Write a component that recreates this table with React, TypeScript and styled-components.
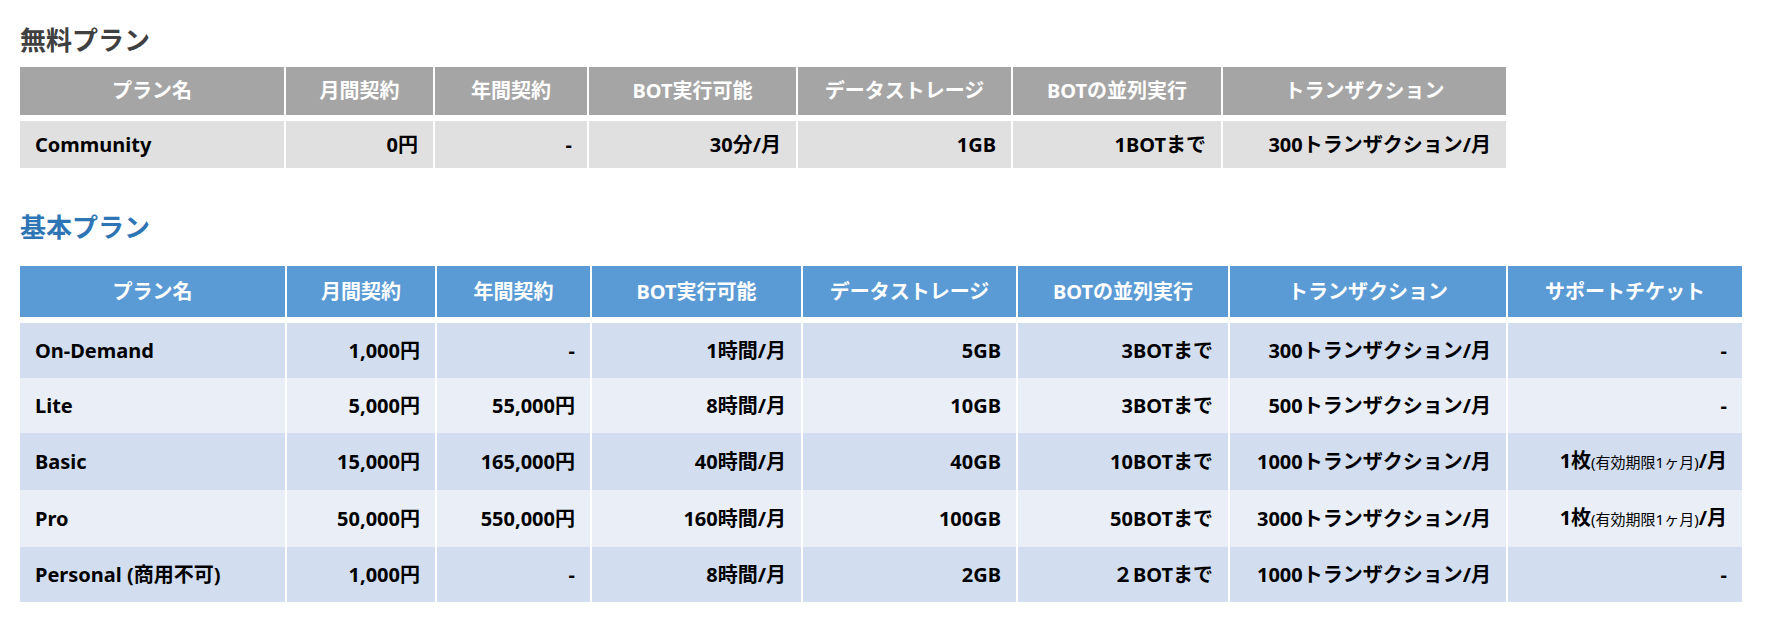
import React, { ReactNode } from 'react'
import styled, { createGlobalStyle } from 'styled-components'

type Tone = 'gray' | 'blue'

const palette = {
  gray: { title: '#404040', head: '#a5a5a5', band1: '#e0e0e0', band2: '#e0e0e0' },
  blue: { title: '#2e75b6', head: '#5b9bd5', band1: '#d2deef', band2: '#e9eef7' },
}

const GlobalStyle = createGlobalStyle`
  html, body {
    margin: 0;
    padding: 0;
    background: #ffffff;
  }

  body {
    font-family: "Noto Sans", "Noto Sans CJK JP", sans-serif;
    color: #000000;
  }
`

const Page = styled.div`
  display: flex;
  flex-direction: column;
  padding: 22px 0 0 20px;
`

const Section = styled.section<{ $gap: number; $top: number }>`
  display: flex;
  flex-direction: column;
  gap: ${p => p.$gap}px;
  margin-top: ${p => p.$top}px;
`

const Title = styled.h2<{ $tone: Tone }>`
  margin: 0;
  font-size: 26px;
  line-height: 36px;
  font-weight: 700;
  color: ${p => palette[p.$tone].title};
`

const Table = styled.table<{ $width: number }>`
  width: ${p => p.$width}px;
  border-collapse: separate;
  border-spacing: 0;
  table-layout: fixed;
`

const Col = styled.col<{ $w: number }>`
  width: ${p => p.$w}px;
`

const HeadCell = styled.th<{ $tone: Tone; $h: number }>`
  padding: 0;
  height: ${p => p.$h}px;
  line-height: ${p => p.$h}px;
  background-color: ${p => palette[p.$tone].head};
  color: #ffffff;
  font-size: 20px;
  font-weight: 700;
  text-align: center;
  white-space: nowrap;
  border-right: 2px solid #ffffff;
  border-bottom: 6px solid #ffffff;

  &:last-child {
    border-right: 0;
  }
`

const Row = styled.tr<{ $tone: Tone; $odd: boolean }>`
  background-color: ${p => (p.$odd ? palette[p.$tone].band1 : palette[p.$tone].band2)};

  & + & td {
    border-top: 2px solid #ffffff;
  }
`

const Cell = styled.td<{ $h: number }>`
  padding: 0 15px 0 15px;
  height: ${p => p.$h}px;
  line-height: ${p => p.$h}px;
  font-size: 20px;
  font-weight: 700;
  text-align: right;
  white-space: nowrap;
  border-right: 2px solid #ffffff;

  &:first-child {
    text-align: left;
  }

  &:last-child {
    border-right: 0;
  }
`

const Note = styled.span`
  font-size: 15px;
  font-weight: 400;
`

const headers = ['プラン名', '月間契約', '年間契約', 'BOT実行可能', 'データストレージ', 'BOTの並列実行', 'トランザクション']

const ticket = (
  <>
    1枚<Note>(有効期限1ヶ月)</Note>/月
  </>
)

const freeRows: ReactNode[][] = [
  ['Community', '0円', '-', '30分/月', '1GB', '1BOTまで', '300トランザクション/月'],
]

const basicRows: ReactNode[][] = [
  ['On-Demand', '1,000円', '-', '1時間/月', '5GB', '3BOTまで', '300トランザクション/月', '-'],
  ['Lite', '5,000円', '55,000円', '8時間/月', '10GB', '3BOTまで', '500トランザクション/月', '-'],
  ['Basic', '15,000円', '165,000円', '40時間/月', '40GB', '10BOTまで', '1000トランザクション/月', ticket],
  ['Pro', '50,000円', '550,000円', '160時間/月', '100GB', '50BOTまで', '3000トランザクション/月', ticket],
  ['Personal (商用不可)', '1,000円', '-', '8時間/月', '2GB', '２BOTまで', '1000トランザクション/月', '-'],
]

interface PlanTableProps {
  tone: Tone
  columns: string[]
  widths: number[]
  rows: ReactNode[][]
  headH: number
  rowH: number
}

const PlanTable = ({ tone, columns, widths, rows, headH, rowH }: PlanTableProps) => (
  <Table $width={widths.reduce((a, b) => a + b, 0)}>
    <colgroup>
      {widths.map((w, i) => (
        <Col key={i} $w={w} />
      ))}
    </colgroup>
    <thead>
      <tr>
        {columns.map(c => (
          <HeadCell key={c} $tone={tone} $h={headH}>
            {c}
          </HeadCell>
        ))}
      </tr>
    </thead>
    <tbody>
      {rows.map((row, r) => (
        <Row key={r} $tone={tone} $odd={r % 2 === 0}>
          {row.map((cell, i) => (
            <Cell key={i} $h={rowH}>
              {cell}
            </Cell>
          ))}
        </Row>
      ))}
    </tbody>
  </Table>
)

export default function App() {
  return (
    <Page>
      <GlobalStyle />
      <Section $gap={9} $top={0}>
        <Title $tone="gray">無料プラン</Title>
        <PlanTable
          tone="gray"
          columns={headers}
          widths={[266, 149, 154, 209, 215, 210, 283]}
          rows={freeRows}
          headH={48}
          rowH={47}
        />
      </Section>
      <Section $gap={21} $top={41}>
        <Title $tone="blue">基本プラン</Title>
        <PlanTable
          tone="blue"
          columns={[...headers, 'サポートチケット']}
          widths={[267, 150, 155, 211, 215, 212, 278, 234]}
          rows={basicRows}
          headH={51}
          rowH={55}
        />
      </Section>
    </Page>
  )
}
